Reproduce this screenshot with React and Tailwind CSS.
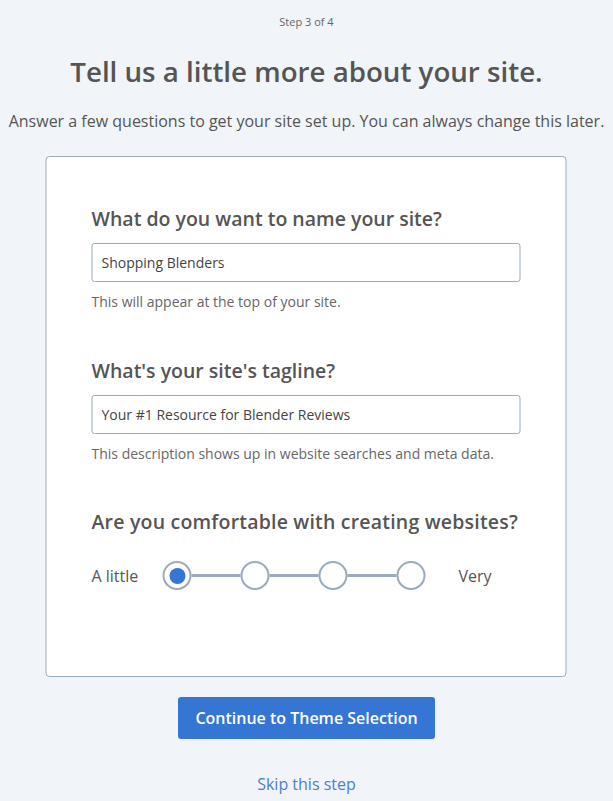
export default function App() {
  const levels = [0, 1, 2, 3];
  const selected = 0;

  return (
    <div className="min-h-[801px] bg-[#f1f4f8] font-['Open_Sans',sans-serif] text-[#555] flex flex-col items-center">
      <p className="mt-[13px] text-[11px] leading-[18px] text-[#666]">Step 3 of 4</p>
      <h1 className="mt-[21px] text-[27.7px] leading-[38px] font-semibold text-[#555]">
        Tell us a little more about your site.
      </h1>
      <p className="mt-[20px] text-[16px] leading-[22px] text-[#555] whitespace-nowrap">
        Answer a few questions to get your site set up. You can always change this later.
      </p>

      <div className="mt-[24px] w-[521px] h-[521px] -translate-x-[0.5px] bg-white border border-[#9aabbd] rounded-[4px] px-[45px] pt-[49px]">
        <h2 className="text-[19.5px] leading-[26px] font-semibold text-[#555]">What do you want to name your site?</h2>
        <input
          defaultValue="Shopping Blenders"
          className="mt-[11px] block w-full h-[39px] border border-[#9aabbd] rounded-[3px] px-[9px] text-[14px] text-[#444] outline-none"
        />
        <p className="mt-[10px] text-[14px] leading-[20px] text-[#666]">This will appear at the top of your site.</p>

        <h2 className="mt-[46px] text-[19.5px] leading-[26px] font-semibold text-[#555]">What's your site's tagline?</h2>
        <input
          defaultValue="Your #1 Resource for Blender Reviews"
          className="mt-[11px] block w-full h-[39px] border border-[#9aabbd] rounded-[3px] px-[9px] text-[14px] text-[#444] outline-none"
        />
        <p className="mt-[10px] text-[14px] leading-[20px] text-[#666]">This description shows up in website searches and meta data.</p>

        <h2 className="mt-[45px] text-[19.5px] leading-[26px] font-semibold text-[#555] tracking-[0.2px]">Are you comfortable with creating websites?</h2>
        <div className="mt-[26px] flex items-center">
          <span className="w-[71px] text-[16px] leading-[22px] text-[#555]">A little</span>
          <div className="flex items-center">
            {levels.map((l) => (
              <div key={l} className="flex items-center">
                {l > 0 && <div className="w-[49px] h-[3px] bg-[#9aabbd]" />}
                <button className="w-[29px] h-[29px] rounded-full border-2 border-[#9aabbd] bg-white flex items-center justify-center">
                  {l === selected && <span className="w-[16px] h-[16px] rounded-full bg-[#3575d3]" />}
                </button>
              </div>
            ))}
          </div>
          <span className="ml-[33px] text-[16px] leading-[22px] text-[#555]">Very</span>
        </div>
      </div>

      <button className="mt-[20px] w-[257px] h-[42px] bg-[#3575d3] rounded-[3px] text-white text-[16px] font-semibold">
        Continue to Theme Selection
      </button>
      <a href="#" className="mt-[33px] text-[16px] text-[#4a80d0]">Skip this step</a>
    </div>
  );
}
